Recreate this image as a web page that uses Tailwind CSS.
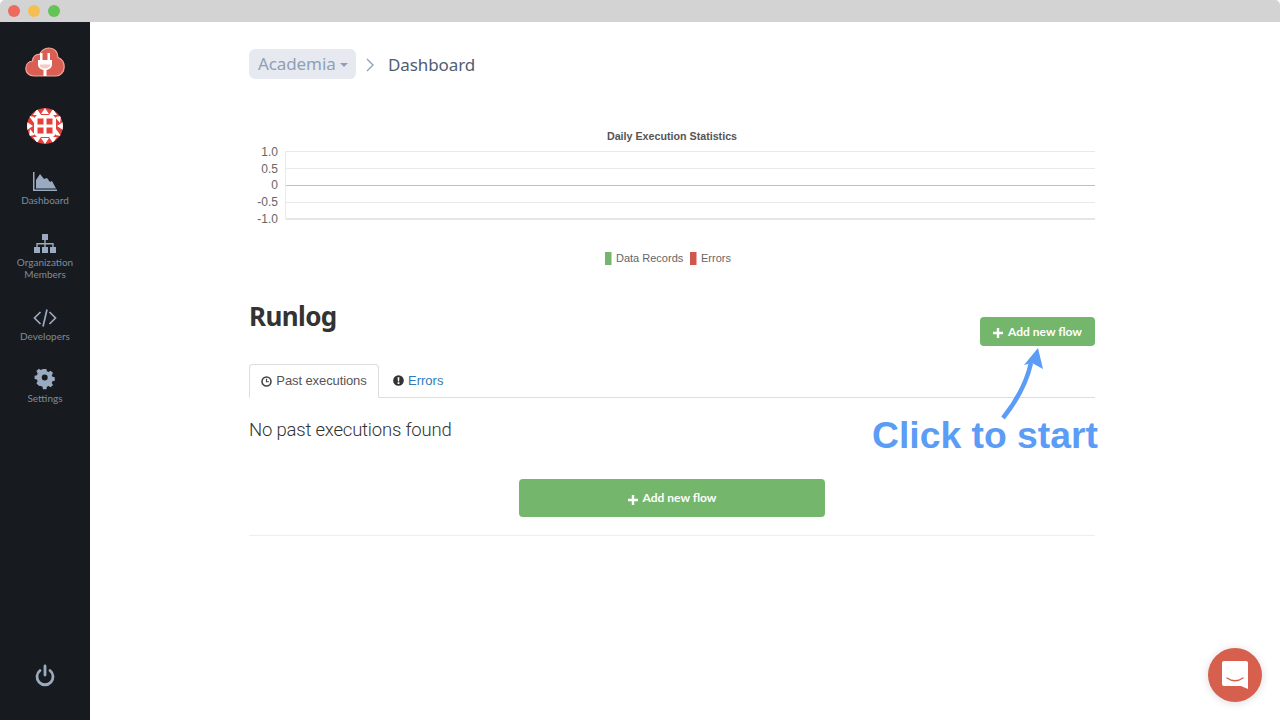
<!DOCTYPE html>
<html>
<head>
<meta charset="utf-8">
<script src="https://cdn.jsdelivr.net/npm/@tailwindcss/browser@4"></script>
</head>
<body class="bg-white overflow-hidden">
<div class="relative w-[1280px] h-[720px] overflow-hidden flex flex-col font-['Liberation_Sans',sans-serif]">
  <div class="h-[22px] shrink-0 bg-[#d3d3d3] rounded-t-[5px] flex items-center gap-2 pl-2">
    <span class="w-3 h-3 rounded-full bg-[#ed6a5f]"></span>
    <span class="w-3 h-3 rounded-full bg-[#f5bf4f]"></span>
    <span class="w-3 h-3 rounded-full bg-[#61c454]"></span>
  </div>
  <div class="flex flex-1 min-h-0">
    <aside class="w-[90px] shrink-0 bg-[#171b1f] flex flex-col items-center text-[#7f8b9b] text-[10px] leading-[12px] font-['Lato',sans-serif]">
      <svg class="mt-[25px] block" width="40" height="30" viewBox="0 0 40 30">
        <path d="M9 29C4 29 .8 25.500.8 21.500.8 17.500 3.500 14.500 7.500 14 7.500 9.500 11 7 14.500 7.500 16.500 3 20.500 1 24 1 29.500 1 33 5 33 10.500 37 12 39.200 15.500 39.200 20 39.200 25 35.500 29 31 29Z" fill="#da5f52" stroke="#f0a79e" stroke-width="1.200"/>
        <path d="M15 6h2.500v7H15zM22.500 6H25v7h-2.500zM13 13h14v4.500c0 3-2.500 5-5.500 5.500V29h-3v-6c-3-.5-5.500-2.500-5.500-5.500z" fill="#fff"/>
        <path d="M14.500 17.500h11c-.5 2.500-2.500 4-5.500 4s-5-1.500-5.500-4z" fill="#f5c8c2"/>
      </svg>
      <svg class="mt-[31px] block rounded-full" width="36" height="36" viewBox="0 0 36 36">
        <circle cx="18" cy="18" r="18" fill="#e5403a"/>
        <g fill="#fff">
          <path d="M7 7h22v22H7z"/>
          <path d="M2 8l6 1-1 6zM10 1l4 6h-8zM18 0l4 6h-8zM26 1l4 6h-8zM34 8l-1 7-5-6zM36 14l-6 4 6 4zM34 28l-6-1 1-6zM26 35l-4-6h8zM18 36l-4-6h8zM10 35l-4-6h8zM2 28l1-7 5 6zM0 22l6-4-6-4z"/>
        </g>
        <g fill="#e5403a">
          <path d="M10.500 10.500h6v6h-6zM19.500 10.500h6v6h-6zM10.500 19.500h6v6h-6zM19.500 19.500h6v6h-6z"/>
          <path d="M7 7l3 0-3 3zM29 7l-3 0 3 3zM7 29l3 0-3-3zM29 29l-3 0 3-3z"/>
        </g>
      </svg>
      <nav class="mt-[26px] flex flex-col items-center w-full">
        <a class="flex flex-col items-center mb-[26px]">
          <svg class="block" width="24" height="24" viewBox="0 0 24 24"><path d="M0 2h1.500v17.500H24V21H0z" fill="#9aaac0"/><path d="M3 18.500V10l4-6 4 5 3-1 3 4 2-1 4 7.500z" fill="#9aaac0"/></svg>
          <span>Dashboard</span>
        </a>
        <a class="flex flex-col items-center mb-[26px] text-center">
          <svg class="block" width="24" height="24" viewBox="0 0 24 24"><path d="M9 2h6v6h-6zM1 15h6v6H1zM9 15h6v6H9zM17 15h6v6h-6z" fill="#9aaac0"/><path d="M11.300 8h1.400v3h8v4h-1.400v-2.600h-6.600V15h-1.400v-2.600H4.700V15H3.300v-4h8z" fill="#9aaac0"/></svg>
          <span>Organization<br>Members</span>
        </a>
        <a class="flex flex-col items-center mb-[26px]">
          <svg class="block" width="24" height="24" viewBox="0 0 24 24" fill="none" stroke="#9aaac0" stroke-width="1.700"><path d="M7.500 6l-6 6 6 6M16.500 6l6 6-6 6M14 3.500l-4 17"/></svg>
          <span>Developers</span>
        </a>
        <a class="flex flex-col items-center">
          <svg class="block" width="24" height="24" viewBox="0 0 24 24"><path fill="#9aaac0" fill-rule="evenodd" d="M10 2.500h4l.6 2.800 2 .8 2.400-1.500 2.800 2.800-1.500 2.400.8 2 2.800.6v4l-2.800.6-.8 2 1.500 2.400-2.800 2.800-2.400-1.500-2 .8-.6 2.800h-4l-.6-2.800-2-.8L5 22.200l-2.800-2.800 1.500-2.400-.8-2-2.800-.6v-4l2.800-.6.8-2L2.200 5l2.800-2.800 2.400 1.500 2-.8zM12 9a3.500 3.500 0 100 7 3.500 3.500 0 000-7z" transform="translate(1.500 -1.200) scale(.85)"/></svg>
          <span>Settings</span>
        </a>
      </nav>
      <svg class="mt-auto mb-[32px] block" width="20" height="24" viewBox="0 0 20 24" fill="none" stroke="#9aaac0" stroke-width="2.800" stroke-linecap="round"><path d="M5 6.500a8 8 0 1010 0M10 2v9"/></svg>
    </aside>
    <main class="flex-1 pl-[159px] min-w-0">
      <div class="w-[846px]">
        <div class="flex items-center mt-[27px] h-[30px]">
          <div class="w-[107px] h-[30px] rounded-[6px] bg-[#e6eaf0] flex items-center pl-[9px] text-[17px] text-[#8fa0b6] font-['Noto_Sans',sans-serif]">
            <span class="tracking-[-0.1px]">Academia</span>
            <span class="ml-[4px] mt-[2px] w-0 h-0 border-x-[4.500px] border-x-transparent border-t-[4.500px] border-t-[#8fa0b6]"></span>
          </div>
          <svg class="ml-[9px] mt-[2px]" width="10" height="14" viewBox="0 0 10 14" fill="none" stroke="#8fa0b6" stroke-width="1.300"><path d="M2 1l6 6-6 6"/></svg>
          <span class="ml-[13px] mt-[1px] text-[17px] text-[#4f5d73] font-['Noto_Sans',sans-serif] tracking-[-0.1px]">Dashboard</span>
        </div>
        <svg class="block mt-[42px]" width="846" height="150" viewBox="0 0 846 150" font-family="Liberation Sans, sans-serif">
          <text x="423" y="19" text-anchor="middle" font-size="10.700" font-weight="700" fill="#555">Daily Execution Statistics</text>
          <g stroke="#e9e9e9" stroke-width="1">
            <path d="M37 30.500H846M37 47.500H846M37 81.500H846"/>
            <path d="M36.500 30V98"/>
          </g>
          <path d="M37 64.500H846" stroke="#c0c0c0"/>
          <path d="M37 98H846" stroke="#dedede" stroke-width="1.500"/>
          <g font-size="12" fill="#666" text-anchor="end">
            <text x="29" y="35">1.0</text>
            <text x="29" y="52">0.5</text>
            <text x="29" y="68">0</text>
            <text x="29" y="85">-0.5</text>
            <text x="29" y="102">-1.0</text>
          </g>
          <rect x="356" y="131" width="6.500" height="13" fill="#74b66b"/>
          <text x="367" y="141" font-size="11" fill="#666">Data Records</text>
          <rect x="441" y="131" width="6.500" height="13" fill="#d0574e"/>
          <text x="452" y="141" font-size="11" fill="#666">Errors</text>
        </svg>
        <div class="flex justify-between items-start mt-[24px]">
          <h1 class="text-[26px] leading-[42px] font-bold text-[#333] tracking-[-0.6px] font-['Noto_Sans',sans-serif]">Runlog</h1>
          <button class="mt-[22px] w-[115px] h-[29px] rounded-[4px] bg-[#74b66b] text-white text-[12px] font-bold flex items-center justify-center gap-[5px] font-['Lato',sans-serif]">
            <svg class="mt-[3px]" width="10" height="10" viewBox="0 0 10 10"><path d="M3.800 0h2.400v3.800H10v2.400H6.200V10H3.800V6.200H0V3.800h3.800z" fill="#fff"/></svg>Add new flow
          </button>
        </div>
        <div class="flex border-b border-[#ddd] h-[34px] mt-[18px]">
          <div class="w-[130px] h-[34px] bg-white border border-[#ddd] border-b-white rounded-t-[4px] flex items-center justify-center gap-[4px] text-[13px] text-[#555]">
            <svg width="11" height="11" viewBox="0 0 12 12" fill="none" stroke="#444" stroke-width="1.700"><circle cx="6" cy="6" r="4.900"/><path d="M6 3v3.300h2.600" stroke-width="1.300"/></svg><span class="tracking-[-0.1px]">Past executions</span>
          </div>
          <div class="flex items-center gap-[4px] pl-[14px] text-[13px] text-[#337ab7]">
            <svg width="11" height="11" viewBox="0 0 12 12"><circle cx="6" cy="6" r="5.800" fill="#333"/><path d="M5 2.500h2l-.3 4.500H5.300zM5 8h2v1.700H5z" fill="#fff"/></svg>Errors
          </div>
        </div>
        <p class="mt-[21px] text-[18.500px] leading-[22px] font-light text-[#333] font-['Roboto',sans-serif] tracking-[-0.2px]">No past executions found</p>
        <button class="block mx-auto mt-[38px] w-[306px] h-[38px] rounded-[4px] bg-[#74b66b] text-white text-[12px] font-bold flex items-center justify-center gap-[5px] font-['Lato',sans-serif]">
          <svg class="mt-[3px]" width="10" height="10" viewBox="0 0 10 10"><path d="M3.800 0h2.400v3.800H10v2.400H6.200V10H3.800V6.200H0V3.800h3.800z" fill="#fff"/></svg>Add new flow
        </button>
        <div class="mt-[18px] border-t border-[#eee]"></div>
      </div>
    </main>
  </div>
  <svg class="absolute left-[995px] top-[345px]" width="55" height="78" viewBox="0 0 55 78" fill="none">
    <path d="M8 73C20 58 31 40 36 18" stroke="#5b9cf6" stroke-width="4.500"/>
    <path d="M43 3L29 20 37 18 48 24Z" fill="#5b9cf6"/>
  </svg>
  <div class="absolute left-[872px] top-[413px] text-[37.300px] leading-[44px] font-bold text-[#5b9cf6] whitespace-nowrap">Click to start</div>
  <div class="absolute left-[1208px] top-[648px] w-[54px] h-[54px] rounded-full bg-[#d6604d] shadow-[0_1px_8px_rgba(0,0,0,0.15)] flex items-center justify-center">
    <svg width="28" height="30" viewBox="0 0 28 30">
      <path d="M3 1h22a2 2 0 012 2v26l-7-3H3a2 2 0 01-2-2V3a2 2 0 012-2z" fill="#fff"/>
      <path d="M6 18c5 3.500 11 3.500 16 0" fill="none" stroke="#d6604d" stroke-width="1.400" stroke-linecap="round"/>
    </svg>
  </div>
</div>
</body>
</html>
